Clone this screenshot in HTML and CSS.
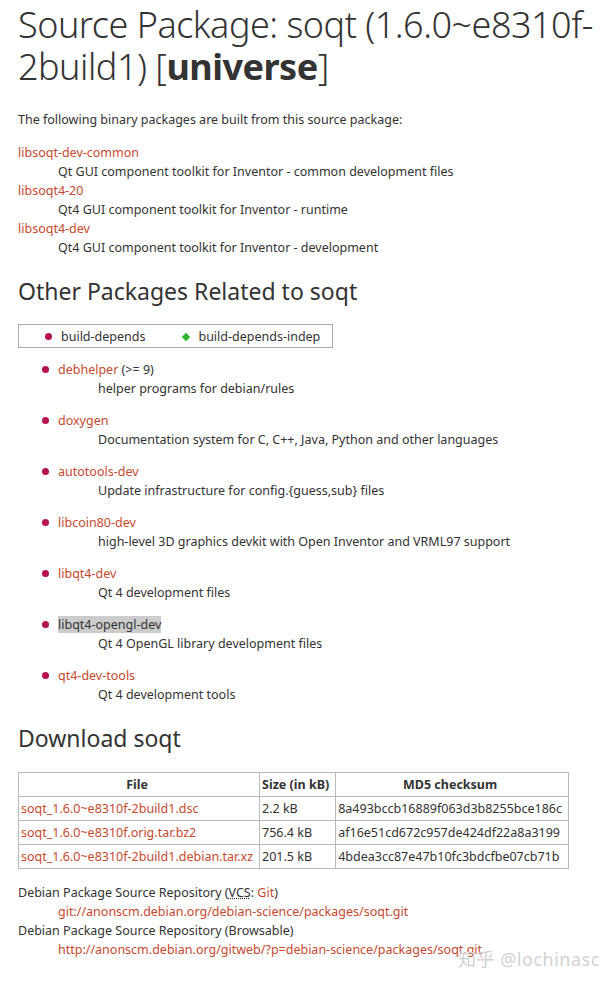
FILE: index.html
```html
<!DOCTYPE html>
<html lang="en">
<head>
    <meta charset="UTF-8">
    <title>Source Package: soqt</title>
    <link rel="stylesheet" href="styles.css">
</head>
<body>

<div class="content">
    <h1>Source Package: soqt (1.6.0~e8310f-2build1) [<strong>universe</strong>]</h1>

    <p class="intro">The following binary packages are built from this source package:</p>

    <dl class="binaries">
        <dt><a href="#">libsoqt-dev-common</a></dt>
        <dd>Qt GUI component toolkit for Inventor - common development files</dd>
        <dt><a href="#">libsoqt4-20</a></dt>
        <dd>Qt4 GUI component toolkit for Inventor - runtime</dd>
        <dt><a href="#">libsoqt4-dev</a></dt>
        <dd>Qt4 GUI component toolkit for Inventor - development</dd>
    </dl>

    <h2>Other Packages Related to soqt</h2>

    <table class="legend">
        <tr>
            <td><span class="dot"></span>build-depends</td>
            <td><span class="diamond"></span>build-depends-indep</td>
        </tr>
    </table>

    <ul class="deps">
        <li>
            <a href="#">debhelper</a> (&gt;= 9)
            <div class="desc">helper programs for debian/rules</div>
        </li>
        <li>
            <a href="#">doxygen</a>
            <div class="desc">Documentation system for C, C++, Java, Python and other languages</div>
        </li>
        <li>
            <a href="#">autotools-dev</a>
            <div class="desc">Update infrastructure for config.{guess,sub} files</div>
        </li>
        <li>
            <a href="#">libcoin80-dev</a>
            <div class="desc">high-level 3D graphics devkit with Open Inventor and VRML97 support</div>
        </li>
        <li>
            <a href="#">libqt4-dev</a>
            <div class="desc">Qt 4 development files</div>
        </li>
        <li>
            <span class="selected">libqt4-opengl-dev</span>
            <div class="desc">Qt 4 OpenGL library development files</div>
        </li>
        <li>
            <a href="#">qt4-dev-tools</a>
            <div class="desc">Qt 4 development tools</div>
        </li>
    </ul>

    <h2>Download soqt</h2>

    <table class="files">
        <tr>
            <th>File</th>
            <th>Size (in kB)</th>
            <th>MD5 checksum</th>
        </tr>
        <tr>
            <td><a href="#">soqt_1.6.0~e8310f-2build1.dsc</a></td>
            <td>2.2 kB</td>
            <td>8a493bccb16889f063d3b8255bce186c</td>
        </tr>
        <tr>
            <td><a href="#">soqt_1.6.0~e8310f.orig.tar.bz2</a></td>
            <td>756.4 kB</td>
            <td>af16e51cd672c957de424df22a8a3199</td>
        </tr>
        <tr>
            <td><a href="#">soqt_1.6.0~e8310f-2build1.debian.tar.xz</a></td>
            <td>201.5 kB</td>
            <td>4bdea3cc87e47b10fc3bdcfbe07cb71b</td>
        </tr>
    </table>

    <dl class="vcs">
        <dt>Debian Package Source Repository (<abbr title="Version Control System">VCS</abbr>: <a href="#">Git</a>)</dt>
        <dd><a href="#">git://anonscm.debian.org/debian-science/packages/soqt.git</a></dd>
        <dt>Debian Package Source Repository (Browsable)</dt>
        <dd><a href="#">http://anonscm.debian.org/gitweb/?p=debian-science/packages/soqt.git</a></dd>
    </dl>
</div>

<div class="watermark">知乎 @lochinasc</div>

</body>
</html>
```

FILE: styles.css
```css
body { margin: 0; background-color: #fff; color: #333; font-family: "Noto Sans", "Noto Sans CJK SC", sans-serif; font-size: 12.5px; line-height: 19px; }
.content { padding: 0 18px; }
a { color: #c7492f; text-decoration: none; }

h1 { font-size: 36px; font-weight: 300; line-height: 42px; margin: 4px 0 22px 0; letter-spacing: -0.5px; }
h1 strong { font-weight: 700; }
h2 { font-size: 23px; font-weight: 400; line-height: 28px; margin: 20px 0 20px 0; }

.intro { margin: 0 0 14px 0; }

dl { margin: 0; }
dt { margin: 0; }
dd { margin: 0 0 0 40px; }

.legend { border: 1px solid #aaa; border-collapse: collapse; width: 312px; margin: -1px 0 12px 0; }
.legend td { padding: 2px 0 1px 26px; white-space: nowrap; }
.legend td + td { padding-left: 38px; padding-right: 12px; }
.dot { display: inline-block; width: 7px; height: 7px; border-radius: 50%; background-color: #b5134d; margin-right: 9px; vertical-align: 1px; }
.diamond { display: inline-block; width: 6px; height: 6px; background-color: #2db52d; transform: rotate(45deg); margin-right: 9px; vertical-align: 1px; }

.deps { list-style: none; margin: 0; padding: 0 0 0 40px; }
.deps li { position: relative; margin-bottom: 13px; }
.deps li::before { content: ""; position: absolute; left: -16px; top: 6px; width: 7px; height: 7px; border-radius: 50%; background-color: #b5134d; }
.deps .desc { padding-left: 40px; }
.selected { background-color: #ccc; }

.files { border-collapse: collapse; margin: 0 0 14px 0; }
.files th, .files td { border: 1px solid #bbb; padding: 2px 6px 2px 2px; text-align: left; white-space: nowrap; height: 19px; }
.files th { font-weight: 700; text-align: center; }

.vcs abbr { text-decoration: underline dotted; }

.watermark { position: absolute; left: 458px; top: 950px; font-size: 18px; color: #d2d2d2; letter-spacing: 0.5px; }
```
